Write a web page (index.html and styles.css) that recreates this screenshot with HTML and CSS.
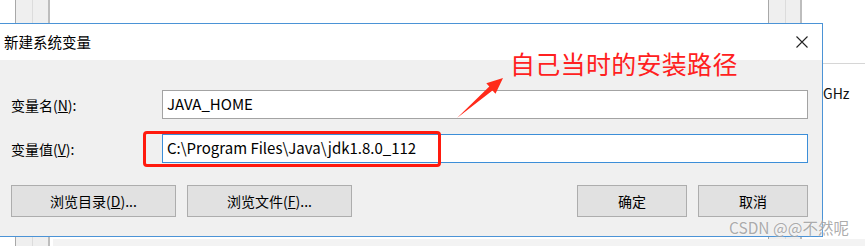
FILE: index.html
```html
<!DOCTYPE html>
<html lang="zh">
<head>
<meta charset="utf-8">
<link rel="stylesheet" href="styles.css">
</head>
<body>
<div class="desktop">
  <div class="bg-cols bg-cols-tl"></div>
  <div class="bg-cols bg-cols-tr"></div>
  <div class="bg-cols bg-cols-bl"></div>
  <div class="bg-cols bg-cols-br"></div>
  <div class="bg-strip"></div>
  <div class="bg-line"></div>
  <div class="bg-ghz">GHz</div>

  <div class="dialog">
    <div class="titlebar">
      <span class="title">新建系统变量</span>
      <svg class="close" width="12" height="12" viewBox="0 0 12 12"><path d="M0.5 0.5 L11.5 11.5 M11.5 0.5 L0.5 11.5" stroke="#222" stroke-width="1.1" fill="none"/></svg>
    </div>
    <div class="body">
      <div class="row">
        <label class="lbl">变量名(<u>N</u>):</label>
        <div class="field">JAVA_HOME</div>
      </div>
      <div class="row">
        <label class="lbl">变量值(<u>V</u>):</label>
        <div class="field focus">C:\Program Files\Java\jdk1.8.0_112</div>
      </div>
      <div class="buttons">
        <div class="group">
          <div class="btn">浏览目录(<u>D</u>)...</div>
          <div class="btn">浏览文件(<u>F</u>)...</div>
        </div>
        <div class="group">
          <div class="btn small">确定</div>
          <div class="btn small">取消</div>
        </div>
      </div>
    </div>
  </div>

  <div class="redbox"></div>
  <svg class="arrow" width="865" height="246" viewBox="0 0 865 246">
    <polygon points="457,118 492.5,90.4 495.5,93.8 503,78 486.3,83.2 489.3,86.6" fill="#ff2a1a"/>
  </svg>
  <div class="note">自己当时的安装路径</div>
  <div class="watermark">CSDN @@不然呢</div>
</div>
</body>
</html>
```

FILE: styles.css
```css
html, body {
  margin: 0;
  padding: 0;
  background: #fff;
}
body {
  font-family: "Noto Sans CJK SC", "Microsoft YaHei", sans-serif;
  color: #000;
}
.desktop {
  position: relative;
  width: 865px;
  height: 246px;
  overflow: hidden;
  background: #fff;
}
.bg-cols {
  position: absolute;
  width: 32px;
  background: #efefef;
  border-left: 1px solid #a8a8a8;
  border-right: 2px solid #bdbdbd;
  box-sizing: border-box;
  background-image: linear-gradient(to right, transparent 16px, #dcdcdc 16px, #dcdcdc 17px, transparent 17px);
}
.bg-cols-tl { left: 15px; top: 0; height: 23px; width: 35px; }
.bg-cols-bl { left: 15px; top: 237px; height: 9px; width: 35px; }
.bg-cols-tr { left: 768px; top: 0; height: 23px; width: 34px; }
.bg-cols-br { left: 768px; top: 237px; height: 9px; width: 34px; }
.bg-strip {
  position: absolute;
  left: 53px;
  top: 239px;
  width: 812px;
  height: 7px;
  background: #f3f3f3;
}
.bg-line {
  position: absolute;
  left: 823px;
  top: 63px;
  width: 42px;
  height: 1px;
  background: #d6d6d6;
}
.bg-ghz {
  position: absolute;
  left: 823px;
  top: 83px;
  font-size: 14px;
  line-height: 20px;
  color: #111;
}

.dialog {
  position: absolute;
  left: -1px;
  top: 23px;
  width: 824px;
  height: 214px;
  box-sizing: border-box;
  border: 1px solid #4b93d6;
  display: flex;
  flex-direction: column;
}
.titlebar {
  height: 36px;
  background: #fff;
  display: flex;
  align-items: center;
  justify-content: space-between;
  padding: 0 14px 0 4px;
}
.title {
  font-size: 14.5px;
  color: #000;
  line-height: 20px;
}
.close {
  display: block;
}
.body {
  flex: 1;
  background: #f0f0f0;
  padding: 30px 14px 0 11px;
  display: flex;
  flex-direction: column;
}
.row {
  display: flex;
  align-items: center;
  height: 29px;
  margin-bottom: 15px;
}
.row + .row {
  margin-bottom: 22px;
}
.lbl {
  width: 151px;
  font-size: 14px;
  line-height: 20px;
  color: #000;
}
.field {
  flex: 1;
  height: 29px;
  box-sizing: border-box;
  background: #fff;
  border: 1px solid #a3a3a3;
  padding: 0 4px;
  font-size: 15px;
  line-height: 26px;
  color: #000;
}
.field.focus {
  border-color: #3c8ed8;
}
.buttons {
  display: flex;
  justify-content: space-between;
}
.group {
  display: flex;
  gap: 11px;
}
.btn {
  width: 165px;
  height: 32px;
  box-sizing: border-box;
  background: #e1e1e1;
  border: 1px solid #adadad;
  display: flex;
  align-items: center;
  justify-content: center;
  font-size: 14px;
  color: #000;
}
.btn.small {
  width: 110px;
}

.redbox {
  position: absolute;
  left: 143px;
  top: 131px;
  width: 298px;
  height: 36px;
  box-sizing: border-box;
  border: 3.5px solid #ff1a0e;
  border-radius: 4px;
}
.arrow {
  position: absolute;
  left: 0;
  top: 0;
}
.note {
  position: absolute;
  left: 510px;
  top: 46px;
  font-size: 25px;
  line-height: 34px;
  color: #ff2020;
  letter-spacing: 0.3px;
}
.watermark {
  position: absolute;
  left: 729px;
  top: 217px;
  font-size: 15.5px;
  line-height: 20px;
  color: rgba(150, 150, 150, 0.8);
  text-shadow: 0 0 2px rgba(255,255,255,0.8);
}
```
